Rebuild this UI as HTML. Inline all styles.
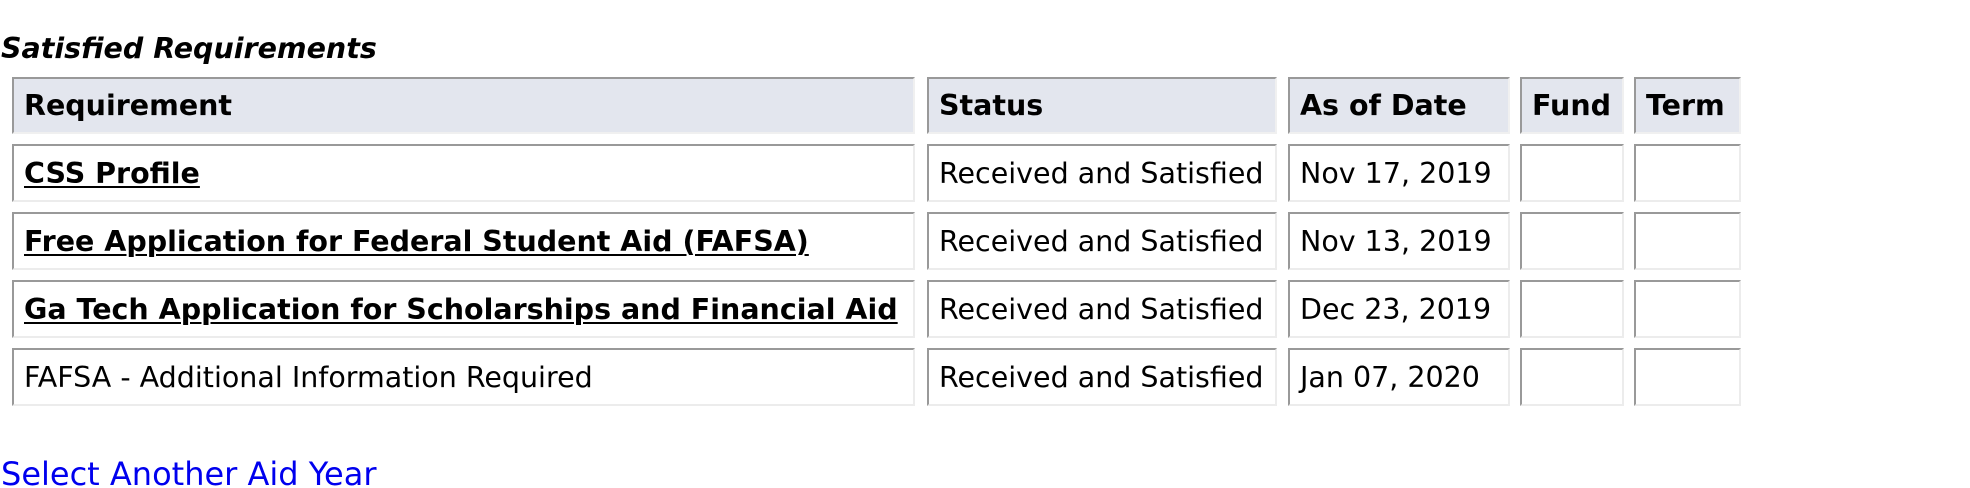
<!DOCTYPE html>
<html><head><meta charset="utf-8">
<style>
html,body{margin:0;padding:0;background:#fff;width:1970px;height:488px;overflow:hidden;position:relative;font-family:"DejaVu Sans","Liberation Sans",sans-serif;font-size:28.5px;color:#000}
.t{position:absolute;left:1px;top:32px;font-weight:bold;font-style:italic;font-size:28.5px;white-space:nowrap}
.c{position:absolute;box-sizing:border-box;border-top:2px solid #999;border-left:2px solid #999;border-bottom:2px solid #ececec;border-right:2px solid #ececec;padding-left:10px;display:flex;align-items:center;white-space:nowrap;background:#fff}
.h{background:#e3e6ee;font-weight:bold;border-bottom-color:#f0f0f0;border-right-color:#f0f0f0}
.b{font-weight:bold;text-decoration:underline;text-underline-offset:3px;text-decoration-thickness:2px}
a.l{position:absolute;left:1px;top:455px;color:#0000ee;text-decoration:none;font-size:32px;white-space:nowrap}
</style></head><body>
<div class="t">Satisfied Requirements</div>

<div class="c h" style="left:12px;top:77px;width:903px;height:57px">Requirement</div>
<div class="c h" style="left:927px;top:77px;width:350px;height:57px">Status</div>
<div class="c h" style="left:1288px;top:77px;width:222px;height:57px">As of Date</div>
<div class="c h" style="left:1520px;top:77px;width:104px;height:57px">Fund</div>
<div class="c h" style="left:1634px;top:77px;width:107px;height:57px">Term</div>

<div class="c" style="left:12px;top:144px;width:903px;height:58px"><span class="b">CSS Profile</span></div>
<div class="c" style="left:927px;top:144px;width:350px;height:58px">Received and Satisfied</div>
<div class="c" style="left:1288px;top:144px;width:222px;height:58px">Nov 17, 2019</div>
<div class="c" style="left:1520px;top:144px;width:104px;height:58px"></div>
<div class="c" style="left:1634px;top:144px;width:107px;height:58px"></div>

<div class="c" style="left:12px;top:212px;width:903px;height:58px"><span class="b">Free Application for Federal Student Aid (FAFSA)</span></div>
<div class="c" style="left:927px;top:212px;width:350px;height:58px">Received and Satisfied</div>
<div class="c" style="left:1288px;top:212px;width:222px;height:58px">Nov 13, 2019</div>
<div class="c" style="left:1520px;top:212px;width:104px;height:58px"></div>
<div class="c" style="left:1634px;top:212px;width:107px;height:58px"></div>

<div class="c" style="left:12px;top:280px;width:903px;height:58px"><span class="b">Ga Tech Application for Scholarships and Financial Aid</span></div>
<div class="c" style="left:927px;top:280px;width:350px;height:58px">Received and Satisfied</div>
<div class="c" style="left:1288px;top:280px;width:222px;height:58px">Dec 23, 2019</div>
<div class="c" style="left:1520px;top:280px;width:104px;height:58px"></div>
<div class="c" style="left:1634px;top:280px;width:107px;height:58px"></div>

<div class="c" style="left:12px;top:348px;width:903px;height:58px">FAFSA - Additional Information Required</div>
<div class="c" style="left:927px;top:348px;width:350px;height:58px">Received and Satisfied</div>
<div class="c" style="left:1288px;top:348px;width:222px;height:58px">Jan 07, 2020</div>
<div class="c" style="left:1520px;top:348px;width:104px;height:58px"></div>
<div class="c" style="left:1634px;top:348px;width:107px;height:58px"></div>

<a class="l">Select Another Aid Year</a>
</body></html>
